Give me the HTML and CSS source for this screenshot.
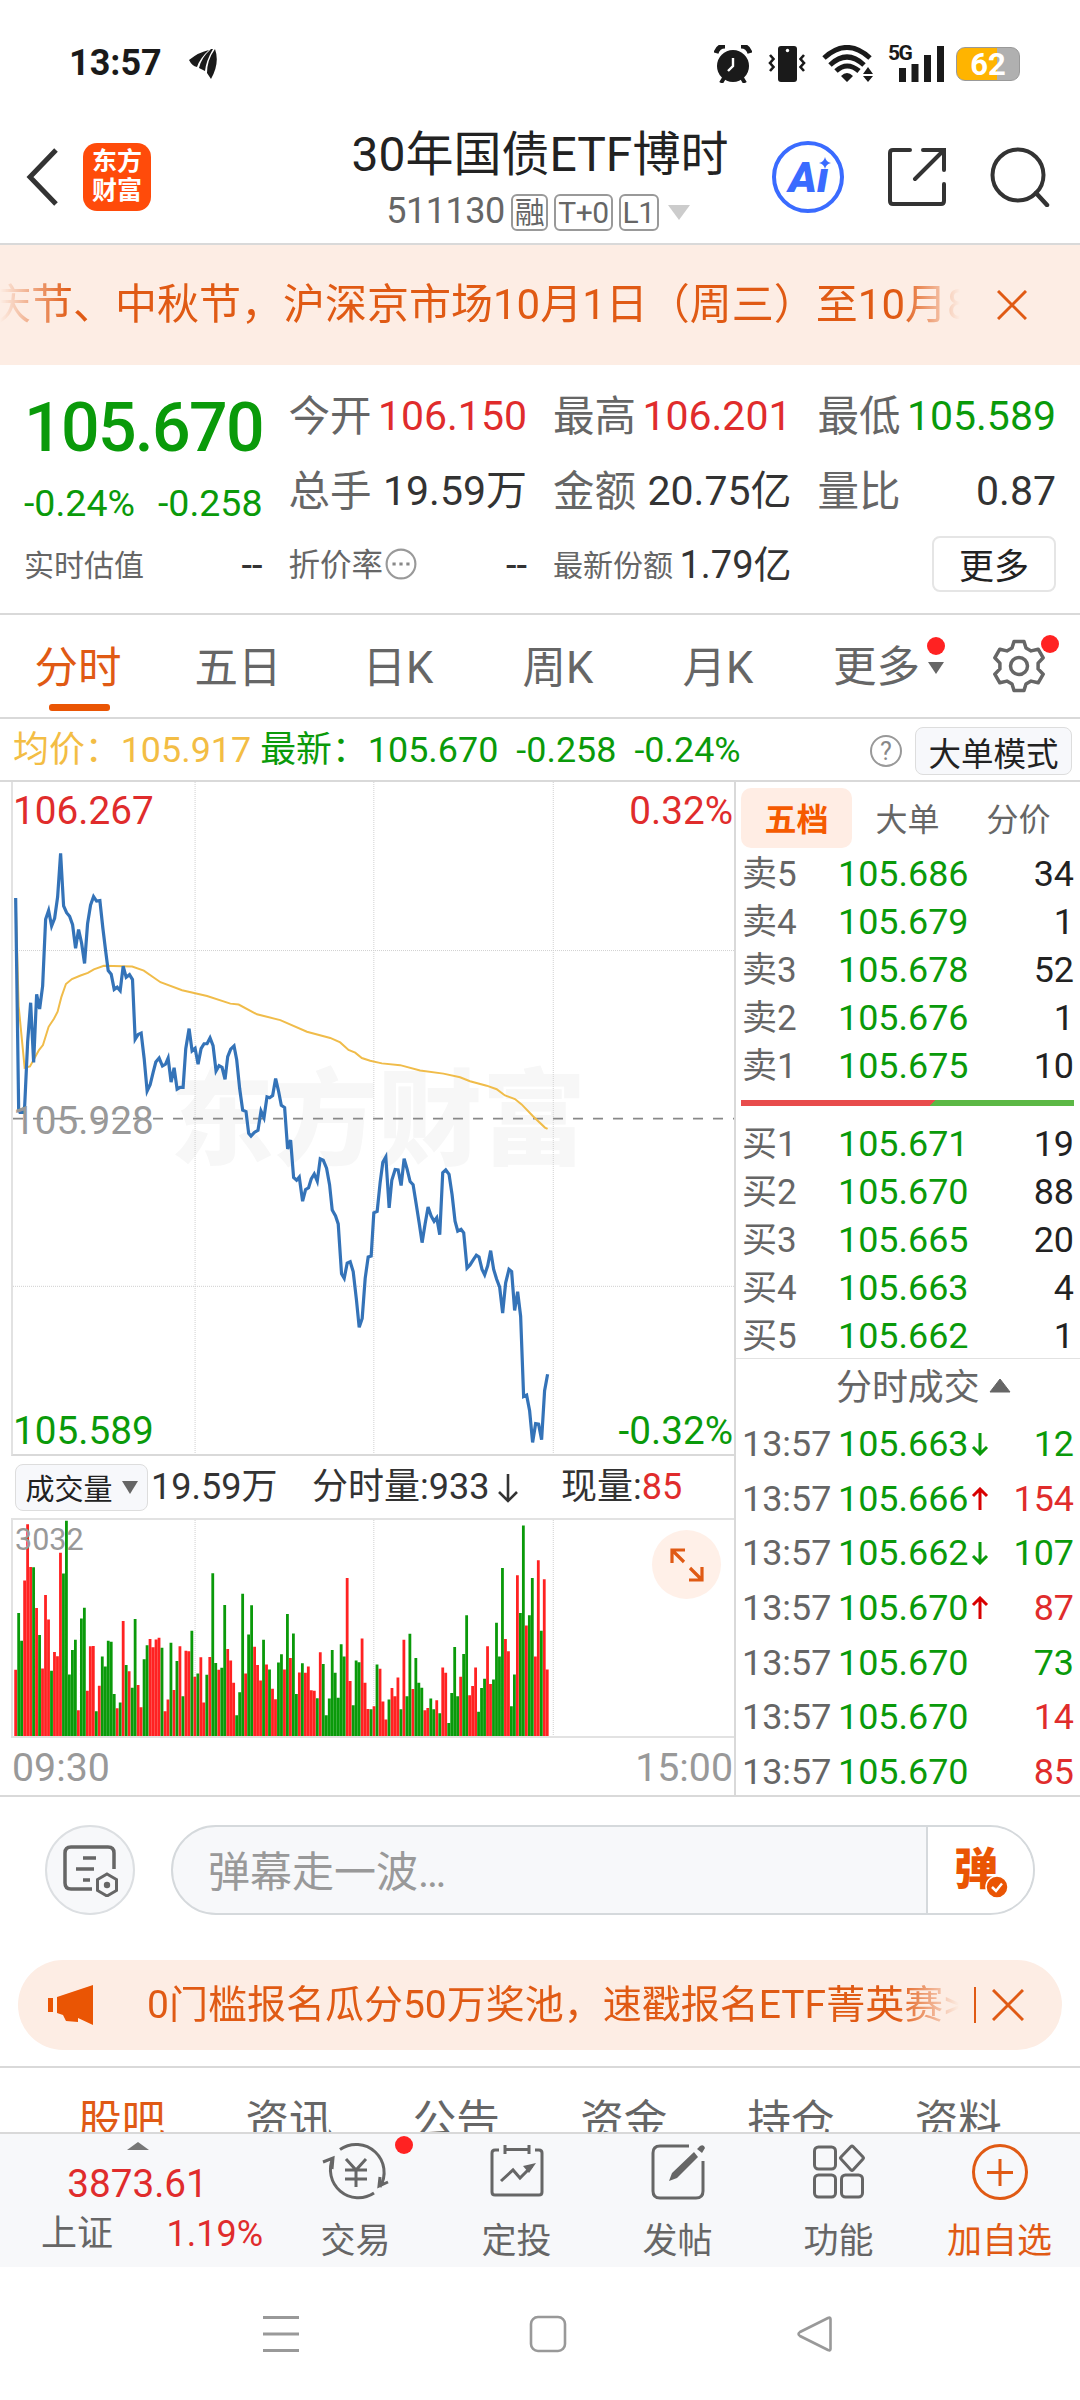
FILE: index.html
```html
<!DOCTYPE html>
<html lang="zh-CN">

<head>
  <meta charset="UTF-8">
  <meta name="viewport" content="width=device-width, initial-scale=1.0">
  <title>30年国债ETF博时</title>
  <link rel="stylesheet" href="styles.css">
</head>

<body>
  <div class="status-bar">
    <span class="status-time">13:57</span>
    <svg class="status-app" width="28" height="30" viewBox="0 0 28 30">
      <path d="M0 11 Q10 3 20 1 Q11 9 8 18 Q3 17 0 11Z M22 0 L24 0 Q17 12 16 22 L10 19 Q12 9 22 0Z M26 0 Q31 14 22 30 L18 24 Q18 11 26 0Z" fill="#1a1a1a" />
    </svg>
    <div class="status-icons">
      <svg width="38" height="38" viewBox="0 0 38 38">
        <circle cx="19" cy="21" r="16" fill="#1a1a1a" />
        <path d="M2 8 Q4 1 11 1 M27 1 Q34 1 36 8" stroke="#1a1a1a" stroke-width="5" fill="none" />
        <path d="M10 33 L7 38 M28 33 L31 38" stroke="#1a1a1a" stroke-width="4" />
        <path d="M19 13 V21 L14 26" stroke="#fff" stroke-width="2.4" fill="none" />
      </svg>
      <svg width="38" height="38" viewBox="0 0 38 38">
        <rect x="10" y="1" width="19" height="36" rx="3" fill="#1a1a1a" />
        <circle cx="19.5" cy="5.500" r="1.700" fill="#fff" />
        <path d="M2 10 L5.500 14 L2 18 L5.500 22 L2 26 M36 10 L32.500 14 L36 18 L32.500 22 L36 26" stroke="#1a1a1a" stroke-width="2.600" fill="none" />
      </svg>
      <svg width="51" height="38" viewBox="0 0 51 38">
        <path d="M2 13 Q25 -8 48 13" stroke="#1a1a1a" stroke-width="5" fill="none" />
        <path d="M8 20 Q25 4 42 20" stroke="#1a1a1a" stroke-width="5" fill="none" />
        <path d="M14 26 Q25 16 37 26" stroke="#1a1a1a" stroke-width="5" fill="none" />
        <path d="M19 31 Q25 25 31 31 L25 37 Z M41 29 L46 22 L51 29 Z M41 31 H51 L46 37 Z" fill="#1a1a1a" />
      </svg>
      <div class="signal">
        <span class="signal-type">5G</span>
        <svg width="52" height="38" viewBox="0 0 52 38">
          <path d="M9.500 23 V37 M22 19 V37 M34.500 10 V37 M47.500 1 V37" stroke="#1a1a1a" stroke-width="7" />
        </svg>
      </div>
      <div class="battery">62</div>
    </div>
  </div>

  <header class="header">
    <div class="header-left">
      <svg width="34" height="58" viewBox="0 0 34 58">
        <path d="M30 2 L4 29 L30 56" stroke="#333" stroke-width="5" fill="none" />
      </svg>
      <div class="logo">东方<br>财富</div>
    </div>
    <div class="header-title">
      <h1>30年国债ETF博时</h1>
      <div class="header-code">
        <span>511130</span>
        <span class="tag">融</span>
        <span class="tag">T+0</span>
        <span class="tag">L1</span>
        <svg class="code-arrow" width="22" height="15" viewBox="0 0 22 15">
          <path d="M0 0 H22 L11 15 Z" fill="#ccc" />
        </svg>
      </div>
    </div>
    <div class="header-right">
      <div class="ai-btn">
        <span>Ai</span>
        <svg class="ai-star" width="12" height="12" viewBox="0 0 12 12">
          <path d="M6 0 Q7 5 12 6 Q7 7 6 12 Q5 7 0 6 Q5 5 6 0Z" fill="#3a6bff" />
        </svg>
      </div>
      <svg width="58" height="58" viewBox="0 0 58 58">
        <path d="M22 2 H5 Q2 2 2 5 V53 Q2 56 5 56 H53 Q56 56 56 53 V36 M35 2 H56 V22 M56 2 L27 31" stroke="#333" stroke-width="4" stroke-linecap="round" fill="none" />
      </svg>
      <svg width="60" height="60" viewBox="0 0 60 60">
        <circle cx="28" cy="28" r="25.500" stroke="#333" stroke-width="4" fill="none" />
        <path d="M46 46 L57 58" stroke="#333" stroke-width="4.500" stroke-linecap="round" />
      </svg>
    </div>
  </header>

  <div class="notice">
    <div class="notice-text">庆节、中秋节，沪深京市场10月1日（周三）至10月8日</div>
    <svg width="30" height="30" viewBox="0 0 30 30">
      <path d="M1 1 L29 29 M29 1 L1 29" stroke="#e05a14" stroke-width="3" />
    </svg>
  </div>

  <section class="quote">
    <div class="quote-main">
      <div class="quote-price">105.670</div>
      <div class="quote-change"><span>-0.24%</span><span>-0.258</span></div>
    </div>
    <div class="item"><label>今开</label><span class="red">106.150</span></div>
    <div class="item"><label>最高</label><span class="red">106.201</span></div>
    <div class="item"><label>最低</label><span class="green">105.589</span></div>
    <div class="item"><label>总手</label><span>19.59万</span></div>
    <div class="item"><label>金额</label><span>20.75亿</span></div>
    <div class="item"><label>量比</label><span>0.87</span></div>
    <div class="item small"><label>实时估值</label><span>--</span></div>
    <div class="item small"><label class="rate">折价率<svg width="32" height="32" viewBox="0 0 30 30">
          <circle cx="15" cy="15" r="13.500" stroke="#999" stroke-width="2" fill="none" />
          <path d="M7 15 H10 M13.500 15 H16.500 M20 15 H23" stroke="#888" stroke-width="3" />
        </svg></label><span>--</span></div>
    <div class="item small"><label>最新份额</label><span>1.79亿</span></div>
    <div class="item small end"><button class="more-btn">更多</button></div>
  </section>

  <nav class="period-tabs">
    <div class="tab active">分时</div>
    <div class="tab">五日</div>
    <div class="tab">日K</div>
    <div class="tab">周K</div>
    <div class="tab">月K</div>
    <div class="tab tab-more">更多
      <svg width="16" height="12" viewBox="0 0 16 12">
        <path d="M0 0 H16 L8 12 Z" fill="#666" />
      </svg>
      <i class="dot"></i>
    </div>
    <div class="tab tab-gear">
      <svg width="56" height="56" viewBox="-28 -28 56 56">
        <path d="M-7 -18 L-5 -24.500 H5 L7 -18 L12.100 -15.100 L19.200 -16.800 L24.200 -8.200 L19.100 -2.900 V2.900 L24.200 8.200 L19.200 16.800 L12.100 15.100 L7 18 L5 24.500 H-5 L-7 18 L-12.100 15.100 L-19.200 16.800 L-24.200 8.200 L-19.100 2.900 V-2.900 L-24.200 -8.200 L-19.200 -16.800 L-12.100 -15.100 Z" stroke="#666" stroke-width="3.500" stroke-linejoin="round" fill="none" />
        <circle r="8.500" stroke="#666" stroke-width="3.500" fill="none" />
      </svg>
      <i class="dot"></i>
    </div>
  </nav>

  <div class="info-row">
    <span class="yellow avg">均价：105.917</span>
    <span class="green last">最新：105.670</span>
    <span class="green diff">-0.258</span>
    <span class="green">-0.24%</span>
    <span class="help">?</span>
    <button class="mode-btn">大单模式</button>
  </div>

  <main class="trade">
    <div class="charts">
      <div class="price-chart">
        <div class="watermark">东方财富</div>
        <svg class="plot" viewBox="37 27 2166 1507" preserveAspectRatio="none">
          <path class="grid" d="M584 27 V1534 M1121 27 V1534 M1660 27 V1534 M37 405 H2203 M37 1158 H2203" />
          <path class="base" d="M37 782 H2203" />
          <polyline id="avg-line" />
          <polyline id="price-line" />
        </svg>
        <span class="axis top left red">106.267</span>
        <span class="axis top right red">0.32%</span>
        <span class="axis middle left">105.928</span>
        <span class="axis bottom left green">105.589</span>
        <span class="axis bottom right green">-0.32%</span>
      </div>
      <div class="volume-row">
        <button class="volume-btn">成交量
          <svg width="16" height="13" viewBox="0 0 16 13">
            <path d="M0 0 H16 L8 13 Z" fill="#666" />
          </svg>
        </button>
        <span class="volume-total">19.59万</span>
        <span class="volume-min">分时量:933<svg width="20" height="30" viewBox="0 0 20 30">
            <path d="M10 1 V28 M1 19 L10 28 L19 19" stroke="#333" stroke-width="2.600" fill="none" />
          </svg></span>
        <span class="volume-now">现量:<b class="red">85</b></span>
      </div>
      <div class="volume-chart">
        <svg class="plot" viewBox="37 205 2166 653" preserveAspectRatio="none">
          <path class="grid" d="M584 205 V858 M1121 205 V858 M1660 205 V858" />
          <path id="bars-up" />
          <path id="bars-down" />
        </svg>
        <span class="volume-max">3032</span>
        <div class="expand">
          <svg width="34" height="34" viewBox="0 0 34 34">
            <path d="M2 15 V2 H15 M2 2 L14 14 M32 19 V32 H19 M32 32 L20 20" stroke="#e05a14" stroke-width="3.200" fill="none" />
          </svg>
        </div>
      </div>
      <div class="time-axis"><span>09:30</span><span>15:00</span></div>
    </div>

    <aside class="depth">
      <div class="depth-tabs">
        <span class="on">五档</span><span>大单</span><span>分价</span>
      </div>
      <div class="book">
        <div class="level"><label>卖5</label><span>105.686</span><em>34</em></div>
        <div class="level"><label>卖4</label><span>105.679</span><em>1</em></div>
        <div class="level"><label>卖3</label><span>105.678</span><em>52</em></div>
        <div class="level"><label>卖2</label><span>105.676</span><em>1</em></div>
        <div class="level"><label>卖1</label><span>105.675</span><em>10</em></div>
      </div>
      <div class="ratio"></div>
      <div class="book">
        <div class="level"><label>买1</label><span>105.671</span><em>19</em></div>
        <div class="level"><label>买2</label><span>105.670</span><em>88</em></div>
        <div class="level"><label>买3</label><span>105.665</span><em>20</em></div>
        <div class="level"><label>买4</label><span>105.663</span><em>4</em></div>
        <div class="level"><label>买5</label><span>105.662</span><em>1</em></div>
      </div>
      <div class="deals-title">分时成交
        <svg width="22" height="15" viewBox="0 0 22 15">
          <path d="M11 1 L21 14 H1 Z" fill="#666" stroke="#666" stroke-linejoin="round" />
        </svg>
      </div>
      <div class="deals">
        <div class="deal"><label>13:57</label><span>105.663</span><svg class="arrow" viewBox="0 0 18 24">
            <path d="M9 1 V22 M2 15 L9 22 L16 15" stroke="#0a9a0a" />
          </svg><em class="green">12</em></div>
        <div class="deal"><label>13:57</label><span>105.666</span><svg class="arrow" viewBox="0 0 18 24">
            <path d="M9 23 V2 M2 9 L9 2 L16 9" stroke="#d80000" />
          </svg><em class="red">154</em></div>
        <div class="deal"><label>13:57</label><span>105.662</span><svg class="arrow" viewBox="0 0 18 24">
            <path d="M9 1 V22 M2 15 L9 22 L16 15" stroke="#0a9a0a" />
          </svg><em class="green">107</em></div>
        <div class="deal"><label>13:57</label><span>105.670</span><svg class="arrow" viewBox="0 0 18 24">
            <path d="M9 23 V2 M2 9 L9 2 L16 9" stroke="#d80000" />
          </svg><em class="red">87</em></div>
        <div class="deal"><label>13:57</label><span>105.670</span><em class="green">73</em></div>
        <div class="deal"><label>13:57</label><span>105.670</span><em class="red">14</em></div>
        <div class="deal"><label>13:57</label><span>105.670</span><em class="red">85</em></div>
      </div>
    </aside>
  </main>

  <div class="danmu">
    <div class="danmu-set">
      <svg width="56" height="52" viewBox="0 0 56 52">
        <path d="M51 24 V8 Q51 2 45 2 H8 Q2 2 2 8 V38 Q2 44 8 44 H29 M20 13 H33 M13 24 H31 M20 35 H27" stroke="#666" stroke-width="3.500" fill="none" />
        <path d="M44 29 L53.500 34.500 V45.500 L44 51 L34.500 45.500 V34.500 Z" stroke="#666" stroke-width="3" fill="none" />
        <circle cx="44" cy="40" r="3.200" fill="#666" />
      </svg>
    </div>
    <div class="danmu-input">
      <span class="danmu-text">弹幕走一波…</span>
      <div class="danmu-send">弹
        <svg class="danmu-check" width="24" height="24" viewBox="0 0 24 24">
          <circle cx="12" cy="12" r="11" fill="#ea5504" stroke="#fff" stroke-width="1.500" />
          <path d="M7 12 L11 16 L17 8.500" stroke="#fff" stroke-width="2.500" fill="none" />
        </svg>
      </div>
    </div>
  </div>

  <div class="promo">
    <svg width="46" height="40" viewBox="0 0 46 40">
      <path d="M45 0 V40 L30 33 V37 L18 36 L15 30 L9 28 V12 Z M0 13 H5 V27 H0 Z" fill="#ea5504" />
    </svg>
    <div class="promo-text">0门槛报名瓜分50万奖池，速戳报名ETF菁英赛&gt;&gt;</div>
    <i class="promo-line"></i>
    <svg width="32" height="32" viewBox="0 0 32 32">
      <path d="M1 1 L31 31 M31 1 L1 31" stroke="#e05a14" stroke-width="3" />
    </svg>
  </div>

  <nav class="news-tabs">
    <span class="on">股吧</span><span>资讯</span><span>公告</span><span>资金</span><span>持仓</span><span>资料</span>
  </nav>

  <footer class="toolbar">
    <div class="index-box">
      <svg width="22" height="8" viewBox="0 0 22 8">
        <path d="M11 0 L22 8 H0 Z" fill="#777" />
      </svg>
      <div class="index-value">3873.61</div>
      <div class="index-row"><span>上证</span><span class="red">1.19%</span></div>
    </div>
    <div class="tool">
      <svg width="68" height="60" viewBox="0 0 68 60" stroke="#666" stroke-width="3" fill="none">
        <path d="M18 7.500 A28 28 0 0 1 58 45 M52 51 A28 28 0 0 1 11 16 M1 20 L11 16 L10 27 M58 35 L57 44 L66 40" />
        <path d="M24 17 L34 28 L44 17 M34 28 V45 M23 28 H45 M23 37 H45" />
      </svg>
      <span>交易</span>
      <i class="dot"></i>
    </div>
    <div class="tool">
      <svg width="60" height="60" viewBox="0 0 60 60" stroke="#666" stroke-width="3" fill="none">
        <path d="M12 8 H8 Q5 8 5 11 V50 Q5 53 8 53 H52 Q55 53 55 50 V11 Q55 8 52 8 H48 M18 3 V12 M42 3 V12 M18 7.500 H42" />
        <path d="M14 39 L26 28 L33 36 L45 24" />
        <path d="M36 24 L49 21 L42 31 Z" fill="#666" stroke="none" />
      </svg>
      <span>定投</span>
    </div>
    <div class="tool">
      <svg width="60" height="60" viewBox="0 0 60 60" stroke="#666" stroke-width="3" fill="none">
        <path d="M41 4 H12 Q5 4 5 11 V49 Q5 56 12 56 H48 Q55 56 55 49 V19" />
        <path d="M46 10 L50 15 L29 36 L21 39 L24 31 Z M49 7 L52 4 Q56 2 57 6 L54 11 Z" fill="#666" stroke="none" />
      </svg>
      <span>发帖</span>
    </div>
    <div class="tool">
      <svg width="60" height="60" viewBox="0 0 60 60" stroke="#666" stroke-width="3" fill="none">
        <rect x="5.500" y="5" width="21" height="22" rx="4" />
        <rect x="5.500" y="33" width="21" height="22" rx="4" />
        <rect x="32.500" y="33" width="21" height="22" rx="4" />
        <path d="M42 4.500 Q43 3.500 44 4.500 L54 15 Q55 16 54 17 L44 28 Q43 29 42 28 L32 17 Q31 16 32 15 Z" />
      </svg>
      <span>功能</span>
    </div>
    <div class="tool add">
      <svg width="60" height="60" viewBox="0 0 60 60" stroke="#e05a14" stroke-width="3" fill="none">
        <circle cx="30" cy="30" r="26.500" />
        <path d="M30 17 V44 M17 30.500 H43" />
      </svg>
      <span>加自选</span>
    </div>
  </footer>

  <div class="sys-nav">
    <svg width="36" height="36" viewBox="0 0 36 36">
      <path d="M0 1.500 H36 M0 18 H36 M0 34.500 H36" stroke="#999" stroke-width="3" />
    </svg>
    <svg width="38" height="38" viewBox="0 0 38 38">
      <rect x="2" y="2" width="34" height="34" rx="7" stroke="#999" stroke-width="2.600" fill="none" />
    </svg>
    <svg width="36" height="36" viewBox="0 0 36 36">
      <path d="M33.500 3 V33 Q33.500 35 31 34 L3 20 Q0 18 3 16 L31 2 Q33.500 1 33.500 3 Z" stroke="#999" stroke-width="2.600" fill="none" />
    </svg>
  </div>
  <script src="chart.js"></script>
</body>

</html>
```

FILE: styles.css
```css
* {
  box-sizing: border-box;
}

body {
  font-family: Roboto, "Noto Sans CJK SC", sans-serif;
  margin: 0;
  width: 1080px;
  height: 2400px;
  background-color: #fff;
  color: #333;
  line-height: 1.2;
  overflow: hidden;
}

svg {
  display: block;
  flex-shrink: 0;
}

button {
  font-family: inherit;
  padding: 0;
  border: 1px solid #ddd;
}

em,
b {
  font-style: normal;
  font-weight: 400;
}

.red {
  color: #e02c2c;
}

.green {
  color: #0a9a0a;
}

.yellow {
  color: #f3bd44;
}

.dot {
  position: absolute;
  width: 18px;
  height: 18px;
  border-radius: 50%;
  background-color: #f22;
}

/* status bar */
.status-bar {
  height: 118px;
  padding: 9px 59px 0 69px;
  display: flex;
  align-items: center;
  color: #1a1a1a;
}

.status-time {
  font-size: 36px;
  font-weight: 700;
}

.status-app {
  margin-left: 27px;
}

.status-icons {
  margin-left: auto;
  display: flex;
  align-items: center;
  gap: 16px;
}

.signal {
  position: relative;
  padding-left: 5px;
  margin-left: -1px;
}

.signal-type {
  position: absolute;
  left: 0;
  top: -4px;
  font-size: 21px;
  font-weight: 700;
  letter-spacing: -1.5px;
}

.battery {
  width: 64px;
  height: 34px;
  margin-left: -5px;
  margin-right: 1px;
  border-radius: 9px;
  border: 1px solid #999;
  background: linear-gradient(to right, #ffb400 64%, #b0b0b0 64%);
  color: #fff;
  font-size: 31px;
  font-weight: 700;
  line-height: 33px;
  text-align: center;
}

/* header */
.header {
  height: 127px;
  border-bottom: 2px solid #d9d9d9;
  display: flex;
  justify-content: space-between;
  padding: 0 30px 0 26px;
}

.header-left {
  width: 320px;
  height: 118px;
  display: flex;
  align-items: center;
  gap: 23px;
}

.logo {
  width: 68px;
  height: 68px;
  border-radius: 14px;
  background-color: #ff4b0a;
  color: #fff;
  font-size: 25px;
  font-weight: 700;
  line-height: 29px;
  text-align: center;
  padding-top: 4px;
}

.header-title {
  flex: 1;
  display: flex;
  flex-direction: column;
  align-items: center;
}

.header-title h1 {
  margin: 9px 0 0 6px;
  font-size: 48px;
  font-weight: 400;
  line-height: 56px;
  color: #222;
  white-space: nowrap;
}

.header-code {
  display: flex;
  align-items: center;
  gap: 6px;
  height: 40px;
  margin: 9px 0 0 2px;
  font-size: 36px;
  letter-spacing: -0.5px;
  color: #666;
}

.tag {
  height: 37px;
  padding: 0 2px;
  border: 2px solid #999;
  border-radius: 6px;
  font-size: 30px;
  line-height: 34px;
}

.code-arrow {
  margin-left: 3px;
}

.header-right {
  width: 278px;
  height: 118px;
  display: flex;
  align-items: center;
  justify-content: space-between;
  margin-left: 44px;
}

.ai-btn {
  position: relative;
  width: 72px;
  height: 72px;
  border: 4px solid #3a6bff;
  border-radius: 50%;
  color: #3a6bff;
  font-size: 43px;
  font-weight: 900;
  font-style: italic;
  line-height: 64px;
  text-align: center;
}

.ai-star {
  position: absolute;
  right: 9px;
  top: 12px;
  background-color: #fff;
}

/* notice */
.notice {
  height: 120px;
  background-color: #fdede4;
  display: flex;
  align-items: center;
  padding-right: 53px;
  justify-content: space-between;
}

.notice-text {
  width: 960px;
  overflow: hidden;
  white-space: nowrap;
  font-size: 42px;
  text-indent: -11px;
  color: #e05a14;
  -webkit-mask-image: linear-gradient(to right, transparent, #000 70px, #000 900px, transparent);
  mask-image: linear-gradient(to right, transparent, #000 70px, #000 900px, transparent);
}

/* quote */
.quote {
  height: 250px;
  padding: 14px 24px 0;
  border-bottom: 2px solid #d9d9d9;
  display: grid;
  grid-template-columns: repeat(4, minmax(0, 1fr));
  grid-template-rows: 76px 74px 73px;
  column-gap: 26px;
}

.quote-main {
  grid-row: span 2;
  color: #0a9a0a;
}

.quote-price {
  font-size: 68px;
  font-weight: 500;
  line-height: 98px;
  letter-spacing: -1.7px;
}

.quote-change {
  display: flex;
  justify-content: space-between;
  font-size: 37.5px;
  line-height: 52px;
}

.item {
  display: flex;
  align-items: center;
  justify-content: space-between;
  font-size: 41px;
  white-space: nowrap;
}

.item label {
  display: flex;
  align-items: center;
  font-size: 41.5px;
  color: #666;
}

.item.small {
  font-size: 38px;
}

.item.small label {
  font-size: 30px;
}

.item.small .rate {
  font-size: 31.5px;
}

.rate svg {
  margin: 0 0 3px 2px;
}

.item.end {
  justify-content: flex-end;
}

.more-btn {
  width: 124px;
  height: 56px;
  margin-bottom: 3px;
  padding-bottom: 5px;
  background-color: #fff;
  border: 2px solid #e5e5e5;
  border-radius: 8px;
  font-size: 35px;
  color: #222;
}

/* period tabs */
.period-tabs {
  height: 104px;
  margin-left: -2px;
  border-bottom: 2px solid #d9d9d9;
  display: flex;
  align-items: center;
  color: #666;
  font-size: 43.5px;
}

.tab {
  position: relative;
  width: 160px;
  height: 100%;
  line-height: 108px;
  text-align: center;
}

.tab.active {
  color: #e05a14;
}

.tab.active::after {
  content: "";
  position: absolute;
  left: 51px;
  bottom: 6px;
  width: 61px;
  height: 7px;
  border-radius: 3px;
  background-color: #ea5504;
}

.tab-more {
  display: flex;
  align-items: center;
  width: 193px;
  padding: 4px 0 0 35px;
  gap: 8px;
}

.tab-more .dot {
  left: 129px;
  top: 22px;
}

.tab-gear {
  display: flex;
  align-items: center;
  width: 84px;
}

.tab-gear .dot {
  left: 50px;
  top: 20px;
}

/* info row */
.info-row {
  height: 63px;
  padding: 2px 8px 0 13px;
  display: flex;
  align-items: center;
  font-size: 35.9px;
  border-bottom: 2px solid #d9d9d9;
  white-space: nowrap;
}

.avg {
  margin-right: 9px;
}

.last,
.diff {
  margin-right: 18px;
}

.help {
  width: 32px;
  height: 32px;
  margin-left: auto;
  margin-right: 13px;
  border: 2px solid #999;
  border-radius: 50%;
  color: #888;
  font-size: 25px;
  line-height: 29px;
  text-align: center;
}

.mode-btn {
  width: 157px;
  height: 48px;
  padding-bottom: 4px;
  border-radius: 8px;
  background-color: #f7f8fb;
  color: #222;
  font-size: 32.5px;
}

/* charts */
.trade {
  height: 1015px;
  display: flex;
  border-bottom: 2px solid #d9d9d9;
}

.charts {
  width: 736px;
  padding-left: 11px;
  border-right: 2px solid #d9d9d9;
}

.price-chart {
  position: relative;
  height: 674px;
  border-left: 2px solid #e2e2e2;
  border-bottom: 2px solid #d9d9d9;
}

.plot {
  position: absolute;
  left: 0;
  top: 0;
  width: 721px;
  height: 100%;
}

.plot path,
.plot polyline {
  fill: none;
  vector-effect: non-scaling-stroke;
}

.grid {
  stroke: #d0d0d0;
  stroke-width: 1;
  stroke-dasharray: 1 1;
}

.base {
  stroke: #888;
  stroke-width: 1.8;
  stroke-dasharray: 10 10;
}

#avg-line {
  stroke: #f0bc4a;
  stroke-width: 2;
}

#price-line {
  stroke: #3473b8;
  stroke-width: 3.2;
}

#bars-up {
  stroke: #f22;
  stroke-width: 2.8;
}

#bars-down {
  stroke: #0a9a0a;
  stroke-width: 2.8;
}

.watermark {
  position: absolute;
  left: 157px;
  top: 278px;
  font-size: 104px;
  font-weight: 900;
  line-height: 124px;
  color: #f7f7f7;
}

.axis {
  position: absolute;
  font-size: 38.7px;
  line-height: 48px;
}

.axis.left {
  left: 0;
}

.axis.right {
  right: 1px;
}

.axis.top {
  top: 5px;
}

.axis.middle {
  top: 315px;
  color: #999;
}

.axis.bottom {
  bottom: -1px;
}

.volume-row {
  height: 62px;
  display: flex;
  align-items: center;
  padding: 1px 0 0 4px;
  font-size: 36px;
}

.volume-btn {
  width: 133px;
  height: 47px;
  padding-bottom: 1px;
  display: flex;
  align-items: center;
  justify-content: center;
  gap: 9px;
  border-radius: 8px;
  background-color: #f7f8fb;
  color: #222;
  font-size: 29px;
}

.volume-total {
  margin-left: 3px;
  width: 161px;
}

.volume-min {
  display: flex;
  align-items: center;
  gap: 9px;
  width: 249px;
}

.volume-chart {
  position: relative;
  height: 220px;
  border: 2px solid #e2e2e2;
  border-right: none;
}

.volume-max {
  position: absolute;
  left: 2px;
  top: 2px;
  font-size: 30.5px;
  color: #999;
}

.expand {
  position: absolute;
  right: 13px;
  top: 10px;
  width: 69px;
  height: 69px;
  border-radius: 50%;
  background-color: #fff0e8;
  display: flex;
  align-items: center;
  justify-content: center;
}

.time-axis {
  display: flex;
  justify-content: space-between;
  padding: 0 1px;
  font-size: 39.3px;
  line-height: 60px;
  color: #999;
}

/* depth */
.depth {
  flex: 1;
  font-size: 35.9px;
}

.depth-tabs {
  display: flex;
  padding: 6px 5px 0;
}

.depth-tabs span {
  width: 111px;
  height: 60px;
  border-radius: 10px;
  font-size: 32px;
  line-height: 64px;
  text-align: center;
  color: #666;
}

.depth-tabs .on {
  background-color: #ffede4;
  color: #f55a00;
  font-weight: 700;
}

.book {
  padding: 3px 6px 0 6px;
}

.level {
  height: 48px;
  display: flex;
  align-items: center;
}

.level label,
.deal label {
  width: 96px;
  color: #666;
}

.level label {
  font-size: 35px;
}

.level span,
.deal span {
  color: #0a9a0a;
}

.level em,
.deal em {
  margin-left: auto;
}

.level em {
  color: #222;
}

.ratio {
  height: 6px;
  margin: 9px 6px 12px 5px;
  background: linear-gradient(135deg, #e84c4c 57.5%, #5cb845 57.5%);
}

.ratio + .book {
  height: 240px;
}

.deals-title {
  height: 59px;
  padding: 2px 0 0 100px;
  border-top: 1px solid #e2e2e2;
  display: flex;
  align-items: center;
  gap: 9px;
  color: #666;
}

.deals-title svg {
  margin-bottom: 8px;
}

.deals {
  padding: 0 6px 0 6px;
}

.deal {
  height: 54.6px;
  display: flex;
  align-items: center;
  line-height: 54px;
}

.arrow {
  width: 18px;
  height: 24px;
  margin-left: 2px;
  fill: none;
  stroke-width: 3;
}

/* danmu */
.danmu {
  height: 163px;
  padding: 28px 45px 0;
  display: flex;
  gap: 36px;
}

.danmu-set {
  width: 90px;
  height: 90px;
  border: 2px solid #dcdfe2;
  border-radius: 50%;
  background-color: #f7f8fa;
  display: flex;
  align-items: center;
  justify-content: center;
}

.danmu-set svg {
  margin-left: 1px;
  margin-top: 2px;
}

.danmu-input {
  width: 864px;
  height: 90px;
  border: 2px solid #d5d9dc;
  border-radius: 45px;
  background-color: #f7f8fa;
  display: flex;
  overflow: hidden;
}

.danmu-text {
  flex: 1;
  padding-left: 35px;
  font-size: 42px;
  line-height: 91px;
  color: #999;
}

.danmu-send {
  position: relative;
  width: 107px;
  border-left: 2px solid #d5d9dc;
  background-color: #fff;
  color: #ea5504;
  font-size: 44px;
  font-weight: 900;
  line-height: 86px;
  padding-left: 26px;
}

.danmu-check {
  position: absolute;
  left: 57px;
  top: 48px;
}

/* promo */
.promo {
  height: 90px;
  margin: 0 18px;
  padding: 0 38px 0 30px;
  border-radius: 45px;
  background-color: #fdede4;
  display: flex;
  align-items: center;
}

.promo-text {
  width: 812px;
  margin-left: 53px;
  overflow: hidden;
  white-space: nowrap;
  font-size: 39px;
  color: #e05a14;
  -webkit-mask-image: linear-gradient(to right, #000 750px, transparent);
  mask-image: linear-gradient(to right, #000 750px, transparent);
}

.promo-line {
  width: 2px;
  height: 36px;
  margin: 0 16px 0 15px;
  background-color: #e05a14;
}

/* news tabs */
.news-tabs {
  height: 66px;
  margin-top: 16px;
  padding: 0 38px;
  border-top: 2px solid #d9d9d9;
  display: flex;
  overflow: hidden;
}

.news-tabs span {
  flex: 1;
  font-size: 43.5px;
  line-height: 107px;
  text-align: center;
  color: #666;
}

.news-tabs .on {
  color: #e05a14;
}

/* toolbar */
.toolbar {
  height: 135px;
  border-top: 2px solid #d9d9d9;
  background-color: #f7f8fa;
  display: flex;
}

.index-box {
  width: 275px;
  padding-top: 8px;
  display: flex;
  flex-direction: column;
  align-items: center;
}

.index-value {
  font-size: 38.7px;
  line-height: 46px;
  margin-top: 11px;
  color: #e02c2c;
}

.index-row {
  width: 100%;
  display: flex;
  justify-content: space-between;
  padding: 0 12px 0 41px;
  font-size: 36px;
  line-height: 54px;
  color: #666;
}

.index-row .red {
  color: #e02c2c;
}

.tool {
  position: relative;
  width: 161px;
  padding-top: 8px;
  display: flex;
  flex-direction: column;
  align-items: center;
  color: #666;
  font-size: 35px;
}

.tool span {
  line-height: 60px;
  margin-top: 10px;
}

.tool .dot {
  left: 120px;
  top: 2px;
}

.tool.add {
  color: #e05a14;
}

/* system navigation */
.sys-nav {
  height: 133px;
  padding: 0 247px 0 263px;
  display: flex;
  align-items: center;
  justify-content: space-between;
}
```

FILE: chart.js
```js
// x,y pairs in the units of the plot's viewBox
const price = '45,287 54,760 58,768 66,768 72,755 81,610 90,522 99,656 108,503 117,536 126,485 135,335 144,315 153,350 162,333 171,285 180,187 189,305 198,320 207,328 216,347 225,400 234,358 243,388 252,434 261,345 270,303 279,284 288,294 298,293 307,355 316,410 323,450 332,458 341,492 350,487 359,495 368,440 377,465 387,459 396,470 404,604 413,593 422,590 431,647 440,720 449,706 458,678 466,655 476,646 486,664 495,660 503,646 512,700 521,668 530,716 539,712 548,712 556,625 566,580 575,630 584,624 593,660 602,625 611,614 620,614 629,601 638,618 647,675 656,663 665,667 674,694 682,643 691,626 701,619 709,650 718,715 727,763 737,766 745,815 752,821 762,813 773,808 782,765 791,780 800,733 808,735 817,730 826,692 835,721 843,752 853,757 862,850 871,830 880,914 889,920 897,913 907,967 916,941 925,937 933,917 942,906 951,922 960,872 969,875 979,893 988,930 996,987 1006,1000 1014,1018 1024,1130 1032,1140 1041,1106 1050,1103 1059,1125 1069,1190 1077,1250 1086,1230 1095,1140 1104,1092 1113,1090 1121,993 1131,990 1140,925 1148,880 1157,868 1167,982 1175,920 1185,896 1194,897 1203,932 1212,872 1221,895 1230,923 1239,930 1248,972 1257,1015 1266,1060 1275,1018 1284,980 1293,1000 1302,1012 1310,1004 1319,1042 1328,903 1337,897 1347,907 1356,952 1365,1012 1373,1034 1383,1030 1391,1038 1401,1117 1410,1110 1420,1098 1429,1088 1437,1092 1446,1120 1454,1132 1463,1112 1472,1078 1481,1120 1490,1142 1499,1160 1508,1218 1517,1150 1527,1120 1535,1125 1544,1212 1553,1170 1562,1225 1571,1405 1580,1402 1589,1437 1598,1508 1607,1466 1616,1467 1625,1502 1634,1392 1643,1355';
const average = '45,287 54,530 72,668 88,665 104,643 115,628 127,617 144,576 160,558 171,542 182,510 196,480 214,469 240,461 262,455 280,447 310,439 395,441 430,450 480,476 545,494 620,507 690,524 715,526 770,548 840,561 920,587 990,601 1020,611 1045,628 1065,634 1085,646 1110,652 1145,658 1200,662 1260,674 1330,681 1380,689 1410,698 1460,708 1490,716 1515,730 1545,738 1565,750 1600,777 1635,802 1643,805';

document.getElementById('price-line').setAttribute('points', price);
document.getElementById('avg-line').setAttribute('points', average);

// one bar a minute: r = up, g = down, then the top of the bar
const volume = 'r658 g486 g570 r388 r218 r347 g348 r471 g553 r654 r432 r506 g661 r604 r617 r304 g367 g207 g672 g598 g567 r780 g503 g470 r721 r587 r586 g783 r706 g618 g648 g570 g573 g731 r774 g757 r510 g643 r662 g712 g504 r704 r771 g626 g584 r565 r590 r566 r561 g591 r783 r748 g576 r719 g631 r587 g738 r600 r602 g540 r679 g669 r620 r757 g673 r619 g366 g637 r658 g652 g462 r595 r630 r697 g795 g726 g428 r669 g551 g463 r588 r643 r690 g567 r642 g657 r715 r747 g636 g611 r657 g489 r622 g548 g731 r666 g638 r667 r648 r720 r721 g744 r605 g640 g795 g745 g598 g667 g742 g581 g618 r380 r692 g765 g630 g635 r563 r697 r776 g777 r768 g642 r655 r754 r808 g748 r713 r738 r681 g777 r567 g738 g549 r716 g622 g697 g712 r780 r773 g745 g777 r750 g789 r651 r667 g819 g728 g589 g738 r679 g610 g493 r735 r707 r651 g785 g713 g685 r587 r701 g687 g516 g618 g350 r565 r602 g768 g672 r372 g486 g222 r524 g493 g380 r618 r327 g540 r384 r657'.split(' ');

let up = '';
let down = '';
volume.forEach((bar, i) => {
  const x = (45 + i * 1597 / (volume.length - 1)).toFixed(1);
  const line = `M${x} 858 V${bar.slice(1)} `;
  if (bar[0] === 'r') {
    up += line;
  } else {
    down += line;
  }
});
document.getElementById('bars-up').setAttribute('d', up);
document.getElementById('bars-down').setAttribute('d', down);
```
